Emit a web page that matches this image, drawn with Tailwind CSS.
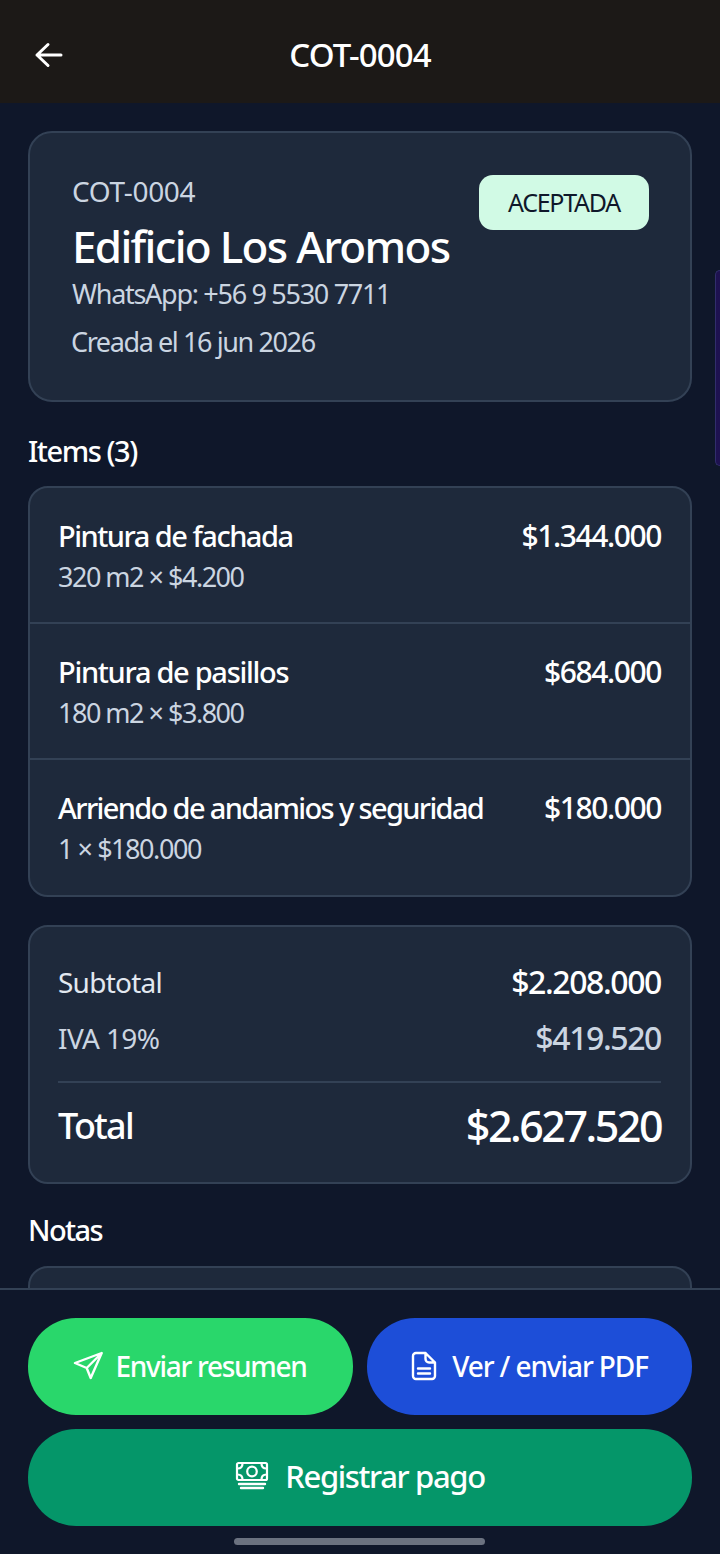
<!DOCTYPE html>
<html>
<head>
  <meta name="viewport" content="width=device-width, initial-scale=1.0" />
  <title>COT-0004</title>
  <script src="https://cdn.jsdelivr.net/npm/@tailwindcss/browser@4"></script>
</head>
<body class="bg-[#0f172a] font-['Noto_Sans',sans-serif] text-white">
  <div class="relative flex h-[1554px] w-[720px] flex-col overflow-hidden">

    <!-- Header -->
    <header class="relative flex h-[103px] shrink-0 items-center justify-center bg-[#1c1917]">
      <svg class="absolute left-[33px] top-[39px] h-[32px] w-[32px]" viewBox="0 0 32 32" fill="none" stroke="white" stroke-width="3" stroke-linecap="round" stroke-linejoin="round">
        <path d="M4 16h24M15 5.500 4 16l11 10.500"></path>
      </svg>
      <h1 class="mt-[6px] text-[33px] font-medium tracking-[-0.9px]">COT-0004</h1>
    </header>

    <!-- Side tab -->
    <div class="absolute right-0 top-[270px] h-[196px] w-[5px] rounded-l-lg border border-r-0 border-[#312e6b] bg-[#1e1250]"></div>

    <main class="min-h-0 flex-1 overflow-hidden px-[28px] pt-[28px]">
      <!-- Client -->
      <section class="relative h-[271px] rounded-[24px] border-2 border-[#334155] bg-[#1e293b] pl-[42px] pt-[40px]">
        <p class="text-[28px] leading-[36px] tracking-[-0.3px] text-[#cbd5e1]">COT-0004</p>
        <h2 class="mt-[8px] text-[44px] font-medium leading-[58px] tracking-[-1.7px]">Edificio Los Aromos</h2>
        <p class="text-[27px] leading-[38px] tracking-[-1.3px] text-[#cbd5e1]">WhatsApp: +56 9 5530 7711</p>
        <p class="-ml-[1px] mt-[10px] text-[27px] leading-[38px] tracking-[-1.4px] text-[#cbd5e1]">Creada el 16 jun 2026</p>
        <span class="absolute right-[41px] top-[42px] flex h-[55px] w-[170px] items-center justify-center rounded-[14px] bg-[#d1fae5] text-[25px] tracking-[-1.25px] text-[#0f172a]">ACEPTADA</span>
      </section>

      <h3 class="mt-[31px] h-[53px] text-[29px] font-medium leading-[36px] tracking-[-1.45px]">Items (3)</h3>

      <!-- Items -->
      <section class="h-[411px] rounded-[20px] border-2 border-[#334155] bg-[#1e293b]">
        <div class="flex h-[136px] justify-between border-b-2 border-[#334155] pl-[28px] pr-[29px] pt-[28px]">
          <div>
            <p class="text-[29px] font-medium leading-[40px] tracking-[-1.5px]">Pintura de fachada</p>
            <p class="mt-[1px] text-[27px] leading-[40px] tracking-[-1.5px] text-[#cbd5e1]">320 m2 × $4.200</p>
          </div>
          <p class="text-[30px] font-medium leading-[40px] tracking-[-1.4px]">$1.344.000</p>
        </div>
        <div class="flex h-[136px] justify-between border-b-2 border-[#334155] pl-[28px] pr-[29px] pt-[28px]">
          <div>
            <p class="text-[29px] font-medium leading-[40px] tracking-[-1.3px]">Pintura de pasillos</p>
            <p class="mt-[1px] text-[27px] leading-[40px] tracking-[-1.5px] text-[#cbd5e1]">180 m2 × $3.800</p>
          </div>
          <p class="text-[30px] font-medium leading-[40px] tracking-[-1.4px]">$684.000</p>
        </div>
        <div class="flex h-[135px] justify-between pl-[28px] pr-[29px] pt-[28px]">
          <div>
            <p class="text-[29px] font-medium leading-[40px] tracking-[-1.65px]">Arriendo de andamios y seguridad</p>
            <p class="mt-[1px] text-[27px] leading-[40px] tracking-[-1.45px] text-[#cbd5e1]">1 × $180.000</p>
          </div>
          <p class="text-[30px] font-medium leading-[40px] tracking-[-1.4px]">$180.000</p>
        </div>
      </section>

      <!-- Totals -->
      <section class="mt-[28px] h-[259px] rounded-[20px] border-2 border-[#334155] bg-[#1e293b] pl-[28px] pr-[29px] pt-[35px]">
        <div class="flex h-[40px] items-center justify-between">
          <span class="text-[28px] tracking-[-0.75px] text-[#e2e8f0]">Subtotal</span>
          <span class="text-[32px] font-medium tracking-[-1.4px]">$2.208.000</span>
        </div>
        <div class="mt-[16px] flex h-[40px] items-center justify-between">
          <span class="text-[28px] tracking-[-0.6px] text-[#cbd5e1]">IVA 19%</span>
          <span class="text-[32px] font-medium tracking-[-1.4px] text-[#cbd5e1]">$419.520</span>
        </div>
        <div class="mt-[23px] flex h-[88px] items-start justify-between border-t-2 border-[#334155] pt-[13px]">
          <span class="text-[36px] font-medium leading-[60px] tracking-[-1.8px]">Total</span>
          <span class="text-[43px] font-medium leading-[60px] tracking-[-2.5px]">$2.627.520</span>
        </div>
      </section>

      <h3 class="mt-[28px] h-[54px] text-[29px] font-medium leading-[36px] tracking-[-1.6px]">Notas</h3>
      <section class="h-[80px] rounded-[20px] border-2 border-[#334155] bg-[#1e293b]"></section>
    </main>

    <!-- Actions -->
    <footer class="relative flex h-[266px] shrink-0 flex-col gap-[14px] border-t-2 border-[#334155] bg-[#0f172a] px-[28px] pt-[28px]">
      <div class="flex gap-[14px]">
        <button class="flex h-[97px] w-[325px] items-center justify-center gap-[12px] rounded-[48px] bg-[#29d76b] pb-[2px] pr-[3px] text-[28px] font-medium tracking-[-1.3px]">
          <svg class="h-[32px] w-[32px]" viewBox="0 0 32 32" fill="none" stroke="white" stroke-width="2.400" stroke-linecap="round" stroke-linejoin="round">
            <path d="M30.700 3 4 13l11.700 5 4 10zM30.700 3 15.700 18"></path>
          </svg>
          Enviar resumen
        </button>
        <button class="flex h-[97px] w-[325px] items-center justify-center gap-[15px] rounded-[48px] bg-[#1d4ed8] pb-[2px] text-[28px] font-medium tracking-[-1.1px]">
          <svg class="h-[30px] w-[26px]" viewBox="0 0 26 30" fill="none" stroke="white" stroke-width="2.400" stroke-linecap="round" stroke-linejoin="round">
            <path d="M5 2h9.500L24 11.500V25a3 3 0 0 1-3 3H5a3 3 0 0 1-3-3V5a3 3 0 0 1 3-3zM14.500 2v6a3.500 3.500 0 0 0 3.500 3.500h6M7 17.500h12M7 22.500h12"></path>
          </svg>
          Ver / enviar PDF
        </button>
      </div>
      <button class="flex h-[97px] items-center justify-center gap-[16px] rounded-[48px] bg-[#059669] pb-[2px] text-[31px] font-medium tracking-[-1.35px]">
        <svg class="h-[32px] w-[34px]" viewBox="0 0 34 32" fill="none" stroke="white" stroke-width="2.200" stroke-linecap="round" stroke-linejoin="round">
          <rect x="2" y="2" width="30" height="17" rx="1.500"></rect>
          <circle cx="17" cy="10.500" r="4.800"></circle>
          <path d="M2.500 7.500c3 0 5-2 5-5M31.500 7.500c-3 0-5-2-5-5M2.500 13.500c3 0 5 2 5 5M31.500 13.500c-3 0-5 2-5 5"></path>
          <path d="M4 23h26M6 27h22" stroke-width="2.400"></path>
        </svg>
        Registrar pago
      </button>
      <div class="absolute bottom-[9px] left-[234px] h-[7px] w-[251px] rounded-full bg-[#6b7280]"></div>
    </footer>
  </div>
</body>
</html>
